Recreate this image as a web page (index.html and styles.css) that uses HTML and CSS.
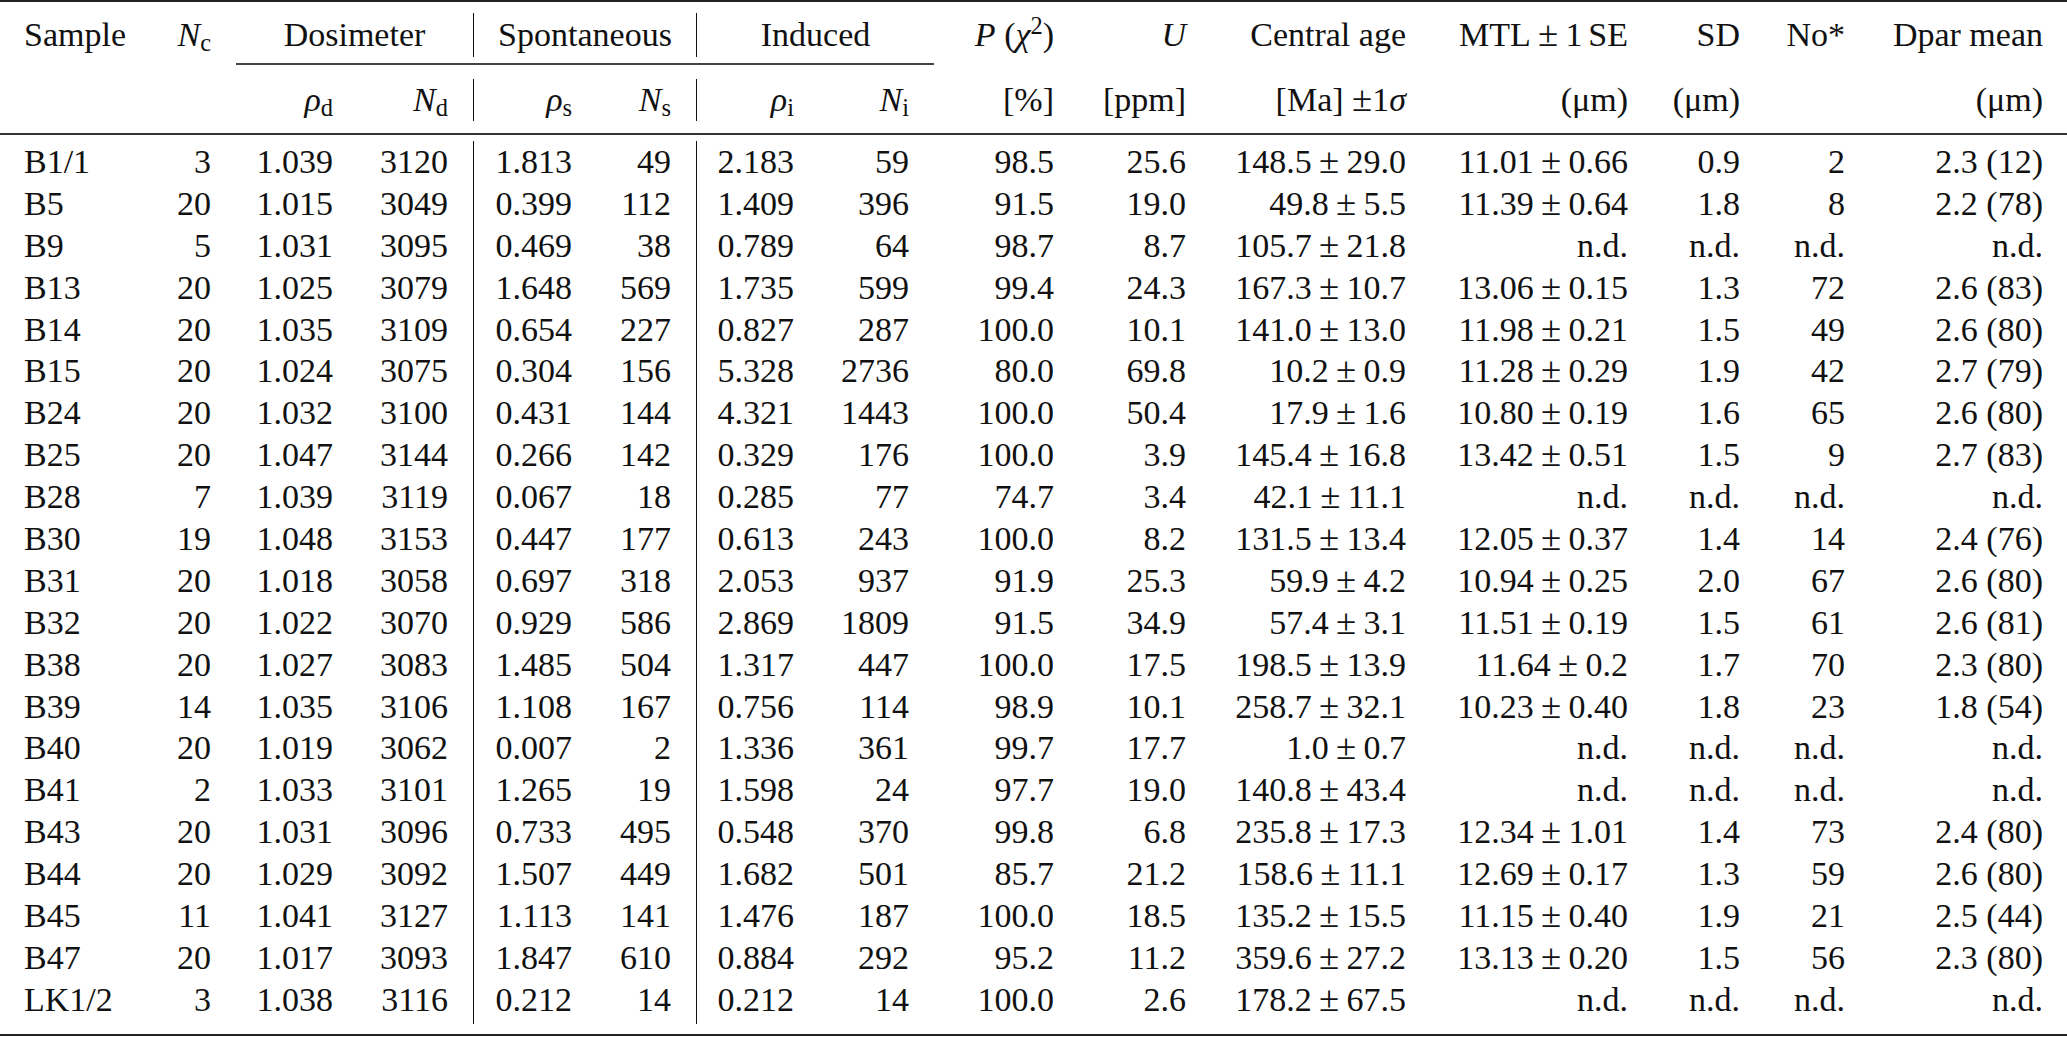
FILE: index.html
```html
<!DOCTYPE html>
<html lang="en">
<head>
<meta charset="utf-8">
<title>Fission track data</title>
<link rel="stylesheet" href="styles.css">
</head>
<body>
<div class="tbl">
  <div class="row head1">
    <div class="c first">Sample</div>
    <div class="c"><i>N</i><span class="sub">c</span></div>
    <div class="c grp g-dos">Dosimeter</div>
    <div class="c grp g-spo vl">Spontaneous</div>
    <div class="c grp g-ind vl">Induced</div>
    <div class="c pcol"><i>P</i> (<i>χ</i><span class="sup">2</span>)</div>
    <div class="c"><i>U</i></div>
    <div class="c">Central age</div>
    <div class="c">MTL<span class="pm">±</span>1<span class="thin"></span>SE</div>
    <div class="c">SD</div>
    <div class="c">No*</div>
    <div class="c last">Dpar mean</div>
  </div>
  <div class="row cmid-row"><div class="cmid"></div></div>
  <div class="row head2 data-like">
    <div class="c"></div>
    <div class="c"></div>
    <div class="c"><i>ρ</i><span class="sub">d</span></div>
    <div class="c"><i>N</i><span class="sub">d</span></div>
    <div class="c"><i>ρ</i><span class="sub">s</span></div>
    <div class="c"><i>N</i><span class="sub">s</span></div>
    <div class="c"><i>ρ</i><span class="sub">i</span></div>
    <div class="c"><i>N</i><span class="sub">i</span></div>
    <div class="c">[%]</div>
    <div class="c">[ppm]</div>
    <div class="c">[Ma] <span class="pm2">±</span>1<i>σ</i></div>
    <div class="c">(μm)</div>
    <div class="c">(μm)</div>
    <div class="c"></div>
    <div class="c">(μm)</div>
  </div>
  <div class="midrule"></div>
  <div class="body" id="body"></div>
  <div class="bottomrule"></div>
</div>
<script src="script.js"></script>
</body>
</html>
```

FILE: script.js
```js
const rows = [
["B1/1","3","1.039","3120","1.813","49","2.183","59","98.5","25.6","148.5|29.0","11.01|0.66","0.9","2","2.3 (12)"],
["B5","20","1.015","3049","0.399","112","1.409","396","91.5","19.0","49.8|5.5","11.39|0.64","1.8","8","2.2 (78)"],
["B9","5","1.031","3095","0.469","38","0.789","64","98.7","8.7","105.7|21.8","n.d.","n.d.","n.d.","n.d."],
["B13","20","1.025","3079","1.648","569","1.735","599","99.4","24.3","167.3|10.7","13.06|0.15","1.3","72","2.6 (83)"],
["B14","20","1.035","3109","0.654","227","0.827","287","100.0","10.1","141.0|13.0","11.98|0.21","1.5","49","2.6 (80)"],
["B15","20","1.024","3075","0.304","156","5.328","2736","80.0","69.8","10.2|0.9","11.28|0.29","1.9","42","2.7 (79)"],
["B24","20","1.032","3100","0.431","144","4.321","1443","100.0","50.4","17.9|1.6","10.80|0.19","1.6","65","2.6 (80)"],
["B25","20","1.047","3144","0.266","142","0.329","176","100.0","3.9","145.4|16.8","13.42|0.51","1.5","9","2.7 (83)"],
["B28","7","1.039","3119","0.067","18","0.285","77","74.7","3.4","42.1|11.1","n.d.","n.d.","n.d.","n.d."],
["B30","19","1.048","3153","0.447","177","0.613","243","100.0","8.2","131.5|13.4","12.05|0.37","1.4","14","2.4 (76)"],
["B31","20","1.018","3058","0.697","318","2.053","937","91.9","25.3","59.9|4.2","10.94|0.25","2.0","67","2.6 (80)"],
["B32","20","1.022","3070","0.929","586","2.869","1809","91.5","34.9","57.4|3.1","11.51|0.19","1.5","61","2.6 (81)"],
["B38","20","1.027","3083","1.485","504","1.317","447","100.0","17.5","198.5|13.9","11.64|0.2","1.7","70","2.3 (80)"],
["B39","14","1.035","3106","1.108","167","0.756","114","98.9","10.1","258.7|32.1","10.23|0.40","1.8","23","1.8 (54)"],
["B40","20","1.019","3062","0.007","2","1.336","361","99.7","17.7","1.0|0.7","n.d.","n.d.","n.d.","n.d."],
["B41","2","1.033","3101","1.265","19","1.598","24","97.7","19.0","140.8|43.4","n.d.","n.d.","n.d.","n.d."],
["B43","20","1.031","3096","0.733","495","0.548","370","99.8","6.8","235.8|17.3","12.34|1.01","1.4","73","2.4 (80)"],
["B44","20","1.029","3092","1.507","449","1.682","501","85.7","21.2","158.6|11.1","12.69|0.17","1.3","59","2.6 (80)"],
["B45","11","1.041","3127","1.113","141","1.476","187","100.0","18.5","135.2|15.5","11.15|0.40","1.9","21","2.5 (44)"],
["B47","20","1.017","3093","1.847","610","0.884","292","95.2","11.2","359.6|27.2","13.13|0.20","1.5","56","2.3 (80)"],
["LK1/2","3","1.038","3116","0.212","14","0.212","14","100.0","2.6","178.2|67.5","n.d.","n.d.","n.d.","n.d."]
];
const body = document.getElementById("body");
for (const r of rows) {
  const row = document.createElement("div");
  row.className = "row data-like drow";
  for (const v of r) {
    const c = document.createElement("div");
    c.className = "c";
    if (v.includes("|")) {
      const [a, b] = v.split("|");
      c.append(a);
      const pm = document.createElement("span");
      pm.className = "pm";
      pm.textContent = "±";
      c.append(pm, b);
    } else {
      c.textContent = v;
    }
    row.appendChild(c);
  }
  body.appendChild(row);
}
```

FILE: styles.css
```css
html, body {
  margin: 0;
  padding: 0;
  background: #ffffff;
}

body {
  font-family: "Liberation Serif", "Times New Roman", serif;
  font-size: 34px;
  color: #111111;
}

.tbl {
  width: 2067px;
  border-top: 2px solid #222222;
}

.row {
  display: grid;
  grid-template-columns: 140px 96px 117px 120px 119px 104px 118px 120px 141px 136px 220px 222px 112px 105px 197px;
}

.c {
  text-align: right;
  padding-right: 25px;
  white-space: nowrap;
  box-sizing: border-box;
}

i {
  font-style: italic;
}

.sub {
  font-size: 0.72em;
  vertical-align: -0.22em;
  line-height: 1;
}

.sup {
  font-size: 0.72em;
  vertical-align: 0.5em;
  line-height: 1;
}

.pm {
  margin: 0 0.2em;
  font-size: 1.08em;
  line-height: 1;
}

.pm2 {
  font-size: 1.08em;
  line-height: 1;
}

.thin {
  display: inline-block;
  width: 0.17em;
}

/* header row 1 */
.head1 {
  margin-top: 11px;
  height: 44px;
  line-height: 44px;
}

.head1 .first {
  text-align: left;
  padding-left: 24px;
}

.head1 .grp {
  text-align: center;
  padding-right: 0;
}

.head1 .g-dos { grid-column: 3 / 5; }
.head1 .g-spo { grid-column: 5 / 7; }
.head1 .g-ind { grid-column: 7 / 9; }

.head1 .vl {
  border-left: 1px solid #111111;
}

.head1 .pcol {
  padding-right: 21px;
}

.head1 .last {
  padding-right: 24px;
}

/* cmidrule */
.cmid-row {
  margin-top: 6px;
  height: 2px;
}

.cmid {
  grid-column: 3 / 9;
  border-top: 2px solid #444444;
}

/* header row 2 */
.head2 {
  margin-top: 14px;
  height: 42px;
  line-height: 42px;
}

/* shared column rules for header row 2 and data rows */
.data-like > .c:nth-child(1) {
  text-align: left;
  padding-left: 24px;
  padding-right: 0;
}

.data-like > .c:nth-child(3),
.data-like > .c:nth-child(5),
.data-like > .c:nth-child(7) {
  padding-right: 20px;
}

.data-like > .c:nth-child(5),
.data-like > .c:nth-child(7) {
  border-left: 1px solid #111111;
}

.data-like > .c:nth-child(9) {
  padding-right: 21px;
}

.data-like > .c:nth-child(15) {
  padding-right: 24px;
}

.midrule {
  margin-top: 12px;
  border-top: 2px solid #333333;
}

.body {
  margin-top: 6px;
}

.drow {
  height: 41.9px;
  line-height: 41.9px;
}

.drow:last-child {
  height: 44.9px;
}

.bottomrule {
  margin-top: 10px;
  border-top: 2px solid #222222;
}
```
